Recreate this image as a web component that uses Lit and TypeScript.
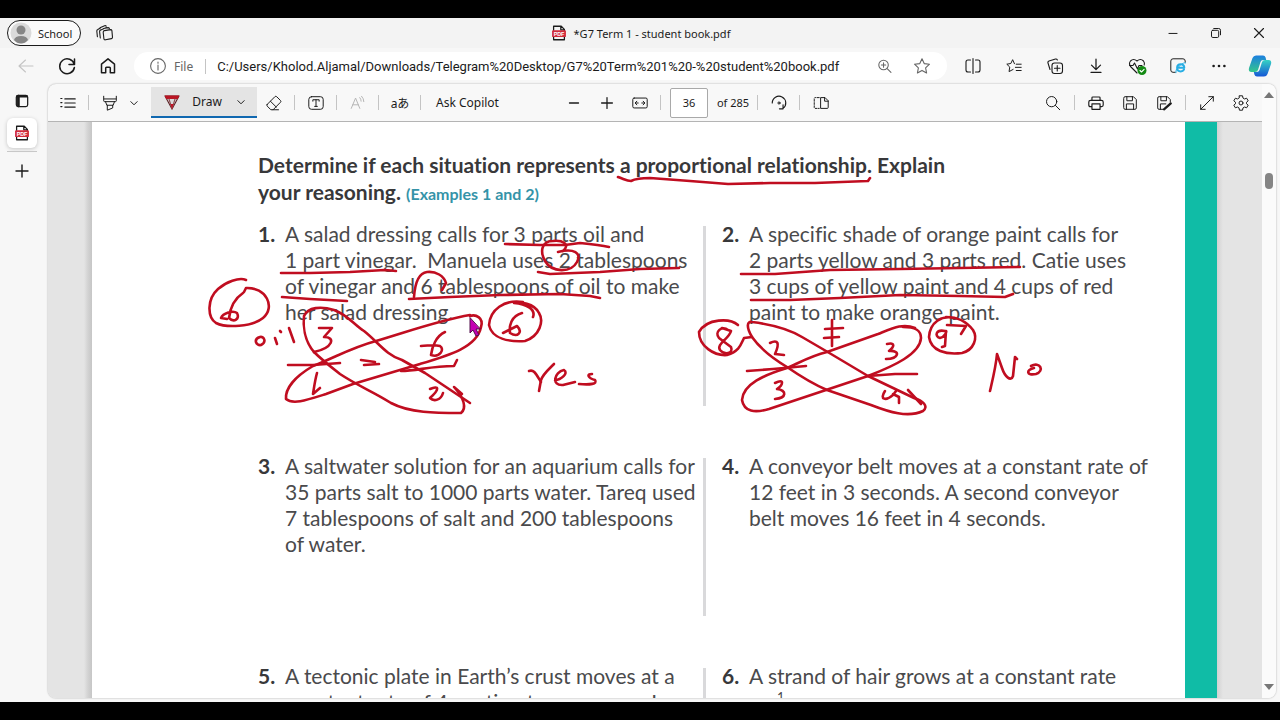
import { LitElement, html, svg, css } from "lit";
import { customElement, property } from "lit/decorators.js";

const shapes: Record<string, unknown> = {
  tabs: svg`<path d="M8.5 5.5 13 4.6q1 0 1.4.8M2.4 13.8 1.8 8q0-1.2 1-1.6L5.400 5M5.300 15 4.600 8.600q0-1.400 1.200-1.700L11.500 4.500M9.500 7.600l6-1q1.200 0 1.400 1l.6 6.600q0 1.200-1 1.400l-6 1.200q-1.400.2-1.600-1l-.7-6.500q0-1.200 1.300-1.700zM5 4.800l4.600-2q1-.4 1.600.4"/>`,
  back: svg`<path d="M17 10H3m6.500-6L3 10l6.500 6"/>`,
  reload: svg`<path stroke-width="1.500" d="M17.300 8.500A7.400 7.400 0 1 0 17.400 11.500M17.500 3v5.500H12"/>`,
  home: svg`<path stroke-width="1.500" d="M3.500 8.200 10 2.800l6.500 5.400v8.500h-4.200V12q0-.8-.8-.8H8.500q-.8 0-.8.8v4.700H3.500z"/>`,
  info: svg`<circle cx="10" cy="10" r="7.400"/><path d="M10 9v5M10 6v1.300"/>`,
  zoomIn: svg`<circle cx="9" cy="8.500" r="5"/><path d="m12.800 12.300 4 4M9 6.200v4.600M6.700 8.500h4.600"/>`,
  star: svg`<path d="m10 2.800 2.200 4.800 5.300.6-3.900 3.600 1 5.200-4.600-2.600-4.600 2.600 1-5.200-3.900-3.600 5.300-.6z"/>`,
  split: svg`<path d="M7.500 4H5Q3 4 3 6v8q0 2 2 2h2.500M12.500 4H15q2 0 2 2v8q0 2-2 2h-2.500M10 2.500v15"/>`,
  favs: svg`<path d="M10.500 7.500 8.500 3 6.500 7.200 2 8l3.300 3.200-.8 5 4.500-2.400M12.500 8H18M11.500 11.500H18M12.500 15H18"/>`,
  collections: svg`<rect x="7" y="7" width="10.500" height="10.500" rx="2.500"/><path d="M12.250 9.500v5.500M9.500 12.250H15M5 13.500 3 7q-.5-1.500 1-2l6.500-2q1.300-.3 1.900 1"/>`,
  download: svg`<path stroke-width="1.400" d="M10 2.500v11M5 9l5 5 5-5M4.500 17.200h11"/>`,
  health: svg`<path d="M10 17 3.500 10.500Q1.500 7.500 3.500 5 6.500 2 10 5q3.500-3 6.500 0 1.500 2 .7 4M2.500 9.500H6L7.500 7l3 6L12 9.500h3"/><circle cx="15" cy="14.500" r="4.500" fill="#138a13" stroke="none"/><path stroke="#fff" d="m13 14.500 1.500 1.500 2.600-2.700"/>`,
  ie: svg`<path d="M7 17H4.500q-2.500 0-2.500-2.500v-10Q2 2 4.500 2h11Q18 2 18 4.500V6"/><path d="M9 12h8q0-4-4-4t-4 4q0 4 4 4 2.600 0 3.700-2" stroke="#28aee4" stroke-width="2.200"/><path d="M7.500 17.500q-1-3 4-7.500t7-3.500" stroke="#28aee4"/>`,
  more: svg`<g fill="currentColor" stroke="none"><circle cx="5.500" cy="10" r="1.100"/><circle cx="10" cy="10" r="1.100"/><circle cx="14.500" cy="10" r="1.100"/></g>`,
  sidebar: svg`<rect x="3.700" y="3.700" width="12.600" height="12.600" rx="2" stroke-width="1.400"/><path stroke-width="2" d="M4.500 5h11"/><path stroke-width="3" d="M6 4.500v11"/>`,
  pdf: svg`<path d="M4 7V2.500h8.500L16 6v2M4 14v3.500h12V14M12 2.500v4h4" stroke-width="1.400"/><rect x="2.300" y="7" width="15.400" height="7.500" rx="1" fill="#d12b3c" stroke="none"/><text x="10" y="12.900" font-size="6" font-weight="700" text-anchor="middle" fill="#fff" stroke="none" font-family="Liberation Sans, sans-serif">PDF</text>`,
  plus: svg`<path stroke-width="1.400" d="M10 4v12M4 10h12"/>`,
  minus: svg`<path stroke-width="1.300" d="M5.500 10h9"/>`,
  list: svg`<path d="M6.500 5.500H18M6.500 10H18M6.500 14.500H18M2 5h1.300M2 9.500h1.300M2 14h1.300" stroke-width="1.300"/>`,
  marker: svg`<path d="M3 2.500v5q0 1 1 1h12q1 0 1-1v-5M5 8.500l1.500 4h7l1.500-4M7 12.500V18l6-2.500v-3M3.500 5.500h13"/>`,
  chevron: svg`<path d="m6.500 8.500 3.500 3.500 3.500-3.500"/>`,
  pen: svg`<path d="M3 4h14l-7 13z" fill="#d9d9d9" stroke="#5c2226"/><path d="M2.600 3.500h14.800L15.800 7H4.200z" fill="#ba1423" stroke="none"/><path d="m7 7 3 10M13 7l-3 10" stroke="#8c4b50"/><path d="m8.500 12 1.500 5 1.500-5z" fill="#c41224" stroke="none"/>`,
  eraser: svg`<path d="M2.500 11.500 11 3q1-1 2 0l4.200 4.200q1 1 0 2L9 17.500H6.500l-4-4q-1-1 0-2zM6 8l6.500 6.500M9 17.500h6"/>`,
  text: svg`<rect x="2" y="3" width="16" height="14" rx="3"/><path d="M6.500 8V6.400h7V8M10 6.400v7.400M8.500 13.800h3"/>`,
  read: svg`<path d="M2.500 16 7.300 4.500 12 16M4.200 12h6.200M12 4q1.500 1.500 1.500 4M14 2.500q2.500 2.500 2.500 6"/>`,
  fit: svg`<rect x="2" y="4.500" width="16" height="11" rx="1.500"/><path d="M8 10H5m1.500-2-2 2 2 2M12 10h3m-1.500-2 2 2-2 2"/>`,
  rotate: svg`<path stroke-width="1.300" d="M2.500 10a7.500 7.500 0 1 1 12 6M14.500 12v4.500H10.500"/><circle cx="10" cy="10" r="1.200"/>`,
  pages: svg`<path d="M10 4h4.500L18 7.500v7.500q0 1-1 1h-7zM14 4v4h4"/><path stroke-dasharray="2 1.500" d="M8 4H3.500q-1 0-1 1v10q0 1 1 1H8"/>`,
  search: svg`<circle cx="8.500" cy="8.500" r="5.700"/><path d="m12.700 12.700 4.800 4.800"/>`,
  print: svg`<path d="M5.500 14H3.700Q2 14 2 12.300V9q0-2 2-2h12q2 0 2 2v3.300q0 1.700-1.700 1.700h-1.800M5.500 7V4.300q0-1 1-1h7q1 0 1 1V7M5.500 11h9v6h-9z" stroke-width="1.300"/>`,
  save: svg`<path d="M3 4.500Q3 3 4.500 3h9.300L17 6.200v9.300q0 1.500-1.500 1.500h-11Q3 17 3 15.500zM6.500 3v4.500h6.200V3M6 17v-6h8v6"/>`,
  saveAs: svg`<path d="M8.500 17h-4Q3 17 3 15.500v-11Q3 3 4.500 3h9.300L17 6.200V9M6.500 3v4.500h6.200V3M6 17v-6h6"/><path stroke-width="2.600" d="m10 17 7.500-6.500"/>`,
  expand: svg`<path d="M3 17 17 3M12 3h5v5M3 12v5h5"/>`,
  gear: svg`<circle cx="10" cy="10" r="2.200"/><path d="M8.300 2h3.400l.5 2.500 1.700 1 2.400-.8L18 7.600l-1.900 1.600v1.600l1.900 1.600-1.700 2.900-2.400-.8-1.700 1-.5 2.500H8.300l-.5-2.500-1.700-1-2.400.8L2 12.400l1.900-1.600V9.200L2 7.600l1.700-2.900 2.400.8 1.700-1z"/>`,
  winMin: svg`<path d="M5.500 10.500h9"/>`,
  winMax: svg`<rect x="5" y="7" width="8" height="8" rx="1.500"/><path d="M7.500 5H13q2 0 2 2v5"/>`,
  winClose: svg`<path d="m5.500 5.500 9 9M14.500 5.500l-9 9"/>`,
};

@customElement("ui-icon")
class UiIcon extends LitElement {
  @property() name = "";
  @property({ type: Number }) size = 20;
  static styles = css`
    :host { display: inline-flex; flex: none; }
    svg { fill: none; stroke: currentColor; stroke-width: 1.1; stroke-linecap: round; stroke-linejoin: round; }
  `;
  render() {
    return html`<svg width=${this.size} height=${this.size} viewBox="0 0 20 20" aria-hidden="true">${shapes[this.name]}</svg>`;
  }
}

/* Pen strokes made on the page, in window coordinates. */
const strokes = [
  // underlines
  "M618 177 C624 179 627 181 631 181 C637 178 643 178 650 178 L690 181 L728 184 L770 183 L815 183 L868 181 870 178",
  "M505 244 540 245 565 245 580 243 C590 244 600 245 609 247",
  "M281 273 310 273 350 272 385 270 396 271",
  "M282 297 310 299 347 301",
  "M538 272 550 274 600 272 640 269 679 268",
  "M409 299 450 297 500 295 560 294 590 296 600 298",
  "M741 274 775 274 830 270 900 269 960 268 1020 267",
  "M751 300 790 300 840 298 900 295 960 296 1005 297 1013 294",
  // ring round the 2, hook round the 6
  "M563 251 C571 244 562 240 553 241 C541 241 540 252 545 261 C552 273 571 273 577 262 C582 253 574 248 558 252",
  "M414 297 C415 283 419 273 427 272 C436 271 444 276 446 283 L442 290",
  // ringed 6 on the left
  "M246 280 C239 277 226 282 218 289 C207 299 207 317 216 323 C226 328 252 327 263 318 C276 307 266 287 246 288 L244 292",
  "M243 293 C234 299 230 309 229 318 C234 323 240 319 237 313 C233 310 223 313 221 318 L227 319",
  // oil
  "M260 337 C253 339 256 346 261 345 C267 342 264 336 260 337",
  "M275 338 277 344", "M280 331 281 332", "M289 328 294 342",
  // first crossed loops
  "M314 352 C304 340 303 325 304 316 C308 307 321 306 334 310 C348 315 354 325 364 331 C378 342 386 355 402 360 L425 373 L470 403",
  "M314 352 C322 360 331 367 340 374 C358 386 374 392 391 403 C410 413 435 413 461 413 C467 408 464 398 454 387 L462 394",
  "M470 315 C440 320 410 331 376 341 C350 348 332 359 313 366 C296 376 285 388 286 399 C293 405 307 400 326 394 L353 384 L420 364 C450 355 477 347 481 327 C484 318 476 314 470 316",
  "M288 365 313 365 340 363",
  "M319 328 332 328 324 337 C336 337 333 348 314 352",
  "M317 373 C315 380 314 388 313 394 L320 388",
  "M361 360 375 362", "M364 365 379 364",
  "M445 332 C436 336 432 347 431 355 C440 358 445 349 440 346 C432 344 428 346 421 346",
  "M401 371 C417 371 430 366 454 366 L457 360",
  "M430 389 C439 385 440 389 430 398 C434 402 441 400 443 393",
  // ringed 6 on the right
  "M523 302 C504 299 490 310 489 325 C492 339 509 342 525 341 C540 336 544 321 539 313 C534 303 520 302 514 303 C526 304 536 309 533 317",
  "M522 313 C511 316 509 326 510 333 C518 338 523 332 517 326 L503 333",
  // Yes
  "M529 371 C534 369 536 374 541 382", "M554 364 C548 370 543 374 541 380 L539 391",
  "M555 380 C561 380 569 373 564 370 C554 372 551 386 563 385 L575 382",
  "M592 374 C586 374 588 378 595 380 C598 384 590 385 579 384",
  // ringed 8
  "M738 325 C730 318 707 318 699 332 C699 346 714 356 727 355 C740 351 741 344 744 338 L752 337",
  "M728 330 C722 325 714 332 719 338 L731 347 C734 354 724 355 720 350 C716 344 729 339 731 331 L722 328",
  // second crossed loops
  "M752 337 C746 327 747 321 752 322 C768 324 787 328 802 337 L826 351 L868 376 L914 398 C923 401 929 406 923 411 C908 418 889 412 871 405 L827 390 C813 384 800 376 787 367 C772 358 759 347 752 337",
  "M915 328 C903 323 893 328 878 334 L827 352 C810 356 797 364 787 368 C764 375 743 384 742 400 C744 412 755 413 769 409 L826 390 L868 376 C894 366 920 354 921 338 C921 330 915 327 903 327",
  "M747 371 773 369 806 366", "M868 376 895 374 917 374",
  "M770 343 C778 339 780 343 775 354 L784 355",
  "M775 383 C785 378 783 385 777 389 C787 390 787 398 775 399",
  "M832 320 832 346", "M825 329 843 328", "M824 338 839 337",
  "M887 344 C896 342 894 347 889 351 C901 350 899 359 886 359",
  "M885 391 C879 400 886 401 893 395 L896 391 M893 394 899 397 899 403", "M908 390 921 404",
  // ringed 9
  "M954 318 C942 315 930 322 929 337 C931 351 946 355 962 353 C974 350 978 338 973 330 C967 322 958 317 946 317",
  "M945 331 C936 329 934 336 940 338 C945 337 947 331 946 331 L945 346 942 347", "M947 325 966 326 961 334",
  // No
  "M990 391 C993 378 996 366 997 354 L1002 368 C1005 377 1011 382 1013 376 L1015 357 1017 359",
  "M1031 366 C1040 361 1045 371 1036 374 C1026 376 1026 370 1034 368",
];

const problems = [
  { n: 1, text: ["A salad dressing calls for 3 parts oil and", "1 part vinegar.\u00a0 Manuela uses 2 tablespoons", "of vinegar and 6 tablespoons of oil to make", "her salad dressing."] },
  { n: 2, text: ["A specific shade of orange paint calls for", "2 parts yellow and 3 parts red. Catie uses", "3 cups of yellow paint and 4 cups of red", "paint to make orange paint."] },
  { n: 3, text: ["A saltwater solution for an aquarium calls for", "35 parts salt to 1000 parts water. Tareq used", "7 tablespoons of salt and 200 tablespoons", "of water."] },
  { n: 4, text: ["A conveyor belt moves at a constant rate of", "12 feet in 3 seconds. A second conveyor", "belt moves 16 feet in 4 seconds."] },
  { n: 5, text: ["A tectonic plate in Earth’s crust moves at a", "constant rate of 4 centimeters per year. In a"] },
  { n: 6, text: ["A strand of hair grows at a constant rate"], numerator: "1" },
];

@customElement("book-page")
class BookPage extends LitElement {
  static styles = css`
    :host { display: flex; flex: 1; min-height: 0; overflow: hidden; background: #e4e4e4; font-family: Lato, sans-serif; font-variant-ligatures: none; color: #4a4a4c; }
    .edge { flex: none; width: 44px; background: linear-gradient(to right, transparent 36px, #d2d2d2 40px, #c6c6c6); }
    .edge.right { width: 45px; background: linear-gradient(to left, transparent 39px, #d2d2d2); }
    .paper { position: relative; flex: 1; min-width: 0; background: #fff; border-right: 32px solid #10bca6; padding: 29px 24px 0 166px; }
    h1 { margin: 0; font-size: 21px; line-height: 27px; font-weight: 700; color: #38383a; white-space: nowrap; }
    .ref { font-size: 16px; color: #3593a8; }
    .grid { display: grid; grid-template-columns: 445px 1fr; row-gap: 47px; margin-top: 14px; }
    .item { display: flex; font-size: 21px; line-height: 26px; min-height: 163px; white-space: nowrap; }
    .item:nth-child(-n + 2) { min-height: 185px; }
    .item:nth-child(even) { background: linear-gradient(#d9d9db, #d9d9db) 0 5px / 3px 100% no-repeat; padding-left: 19px; }
    .n { width: 27px; flex: none; font-weight: 700; color: #38383a; }
    .line { display: block; }
    .num { display: block; font-size: 13px; line-height: 16px; padding-left: 28px; }
    .ink { position: absolute; left: 0; top: 0; width: 1093px; height: 576px; fill: none; stroke: #c00d20; stroke-width: 2.6; stroke-linecap: round; stroke-linejoin: round; }
  `;
  render() {
    return html`
      <div class="edge"></div>
      <article class="paper">
        <h1>Determine if each situation represents a proportional relationship. Explain<br />your reasoning. <span class="ref">(Examples 1 and 2)</span></h1>
        <div class="grid">
          ${problems.map((p) => html`<section class="item"><span class="n">${p.n}.</span><div>${p.text.map((t) => html`<span class="line">${t}</span>`)}${p.numerator ? html`<span class="num">${p.numerator}</span>` : ""}</div></section>`)}
        </div>
        <svg class="ink" viewBox="92 122 1093 576" role="img" aria-label="Pen notes">
          ${strokes.map((d) => svg`<path d=${d} />`)}
          <path d="M470 318v15l3-3 3 6 3-1-3-6h4z" fill="#c400b4" stroke="#52104c" stroke-width="1" />
        </svg>
      </article>
      <div class="edge right"></div>
    `;
  }
}

const btn = (name: string, label: string, size = 18, cls = "") =>
  html`<button class="b ${cls}" aria-label=${label}><ui-icon name=${name} .size=${size}></ui-icon></button>`;
const sep = html`<span class="sep"></span>`;

@customElement("app-root")
class AppRoot extends LitElement {
  static styles = css`
    :host { display: flex; flex-direction: column; height: 100vh; box-sizing: border-box; border: solid #000; border-width: 18px 0; background: #f7f7f7; font-family: "Noto Sans", "Noto Sans CJK JP", sans-serif; font-size: 12px; color: #1b1b1b; overflow: hidden; }
    button, input { font: inherit; color: inherit; border: 0; background: none; padding: 0; margin: 0; box-sizing: border-box; }
    button { display: inline-flex; align-items: center; justify-content: center; }
    .title { display: grid; grid-template-columns: 1fr auto 1fr; align-items: center; height: 30px; flex: none; background: #f3f3f3; font-size: 11px; }
    .left { display: flex; align-items: center; gap: 14px; padding-left: 7px; }
    .pill { height: 26px; width: 74px; border: 1px solid #1b1b1b; border-radius: 13px; background: #fafafa; gap: 6px; justify-content: flex-start; padding-left: 2px; }
    .name { display: flex; align-items: center; gap: 6px; }
    .win { display: flex; justify-content: flex-end; }
    .win .b { width: 43px; }
    .nav { display: flex; align-items: center; height: 36px; flex: none; padding-left: 5px; }
    .nav .b { width: 41px; height: 32px; }
    .nav .dim { color: #c4c4c4; }
    .address { display: flex; align-items: center; flex: 1; min-width: 0; height: 28px; margin: 0 5px 0 6px; border-radius: 14px; background: #fff; padding: 0 6px 0 14px; }
    .address > ui-icon { color: #666; }
    .scheme { margin-left: 6px; color: #666; }
    .address .sep { margin: 0 9px 0 12px; }
    .address input { flex: 1; min-width: 0; padding-left: 2px; font-family: Roboto, sans-serif; font-size: 13px; outline: none; }
    .address .b { width: 38px; color: #666; }
    .main { display: flex; flex: 1; min-height: 0; }
    .side { width: 44px; margin-right: 4px; display: flex; flex-direction: column; align-items: center; padding-top: 8px; flex: none; box-sizing: border-box; }
    .tile { width: 30px; height: 30px; margin: 8px 0 3px; border-radius: 6px; background: #fff; box-shadow: 0 1px 4px #0003; }
    .rule { width: 30px; height: 1px; background: #c8c8c8; margin-bottom: 9px; }
    .panel { display: flex; flex: 1; min-width: 0; margin: 0 4px 4px 0; border-radius: 8px; overflow: hidden; box-shadow: 0 0 2px #0005; background: #f8f8f8; }
    .view { display: flex; flex-direction: column; flex: 1; min-width: 0; }
    .tools { display: flex; align-items: center; height: 38px; flex: none; box-sizing: border-box; border-bottom: 1px solid #b4b4b4; padding: 0 9px 0 8px; white-space: nowrap; }
    .tools .b { width: 24px; height: 28px; flex: none; }
    .tools .off { color: #b5b5b5; }
    .tools .draw { width: 106px; height: 31px; margin: 0 5px; background: #e4e4e4; border-bottom: 2px solid #1068b0; gap: 10px; padding-left: 4px; flex: none; }
    .sep { width: 1px; height: 15px; background: #c4c4c4; margin: 0 9px 0 8px; flex: none; }
    .copilot { margin-left: 6px; }
    .middle { display: flex; align-items: center; margin-left: 63px; }
    .zoom { display: flex; gap: 9px; }
    .middle input { width: 38px; height: 30px; border: 1px solid #a9a9a9; border-radius: 2px; background: #fff; text-align: center; margin-right: 9px; }
    .middle { font-size: 11px; }
    .right { display: flex; align-items: center; margin-left: auto; gap: 10px; }
    .right .sep { margin: 0 -1px; }
    .scroll { width: 14px; flex: none; background: #fbfbfb; display: flex; flex-direction: column; align-items: center; padding: 8px 0; box-sizing: border-box; }
    .up, .down { border: 5px solid transparent; border-top: 0; border-bottom: 6px solid #777; }
    .down { border-bottom: 0; border-top: 6px solid #777; margin-top: auto; }
    .thumb { width: 8px; height: 16px; border-radius: 4px; background: #858585; margin-top: 75px; }
  `;
  render() {
    return html`
      <header class="title">
        <div class="left">
          <button class="pill"><svg width="22" height="22" viewBox="0 0 22 22" aria-hidden="true"><circle cx="11" cy="11" r="10.500" fill="#dadada" /><circle cx="11" cy="8" r="4.500" fill="#868686" /><path d="M4 18q1-4 7-4t7 4q-3 3.500-7 3.500T4 18" fill="#868686" /></svg>School</button>
          ${btn("tabs", "Tab actions", 20)}
        </div>
        <div class="name"><ui-icon name="pdf" .size=${18}></ui-icon><span>*G7 Term 1 - student book.pdf</span></div>
        <div class="win">${btn("winMin", "Minimize")}${btn("winMax", "Restore")}${btn("winClose", "Close", 20)}</div>
      </header>
      <nav class="nav">
        ${btn("back", "Back", 20, "dim")}${btn("reload", "Refresh", 20)}${btn("home", "Home", 20)}
        <div class="address">
          <ui-icon name="info" .size=${20}></ui-icon><span class="scheme">File</span>${sep}
          <input aria-label="Address" value="C:/Users/Kholod.Aljamal/Downloads/Telegram%20Desktop/G7%20Term%201%20-%20student%20book.pdf" />
          ${btn("zoomIn", "Zoom", 19)}${btn("star", "Add to favorites", 20)}
        </div>
        ${btn("split", "Split screen", 20)}${btn("favs", "Favorites")}${btn("collections", "Collections", 20)}${btn("download", "Downloads")}${btn("health", "Browser essentials", 20)}${btn("ie", "Internet Explorer mode")}${btn("more", "More", 24)}
        <button class="b" aria-label="Copilot"><svg width="24" height="24" viewBox="0 0 24 24" aria-hidden="true"><defs><linearGradient id="a" x2="0" y2="1"><stop stop-color="#1c7fe0" /><stop offset="1" stop-color="#35c78c" /></linearGradient><linearGradient id="b" x2="0" y2="1"><stop stop-color="#36d3c4" /><stop offset="1" stop-color="#1556d6" /></linearGradient></defs><path d="M8 1.500h7q2 0 2.600 2l.6 2.500h-3q-2 0-2.700 2L10 16q-.8 2-3 2H3.500Q0 18 1 14L4.500 4Q5.500 1.500 8 1.500z" fill="url(#a)" /><path d="M16 22.500H9q-2 0-2.600-2L5.800 18h3q2 0 2.700-2L14 8q.8-2 3-2h3.500Q24 6 23 10l-3.500 10q-1 2.500-3.500 2.500z" fill="url(#b)" /></svg></button>
      </nav>
      <div class="main">
        <aside class="side">
          ${btn("sidebar", "Tab menu")}
          <button class="tile" aria-label="Student book tab"><ui-icon name="pdf" .size=${18}></ui-icon></button>
          <div class="rule"></div>
          ${btn("plus", "New tab", 20)}
        </aside>
        <div class="panel">
          <div class="view">
            <div class="tools">
              ${btn("list", "Contents")}${sep}${btn("marker", "Highlight")}${btn("chevron", "Highlight options")}
              <button class="draw"><ui-icon name="pen" .size=${20}></ui-icon><span>Draw</span><ui-icon name="chevron" .size=${18}></ui-icon></button>
              ${btn("eraser", "Erase")}${sep}${btn("text", "Add text")}${sep}${btn("read", "Read aloud", 18, "off")}${sep}
              <button class="b" aria-label="Translate">aあ</button>${sep}
              <button class="copilot">Ask Copilot</button>
              <div class="middle">
                <div class="zoom">${btn("minus", "Zoom out", 20)}${btn("plus", "Zoom in")}${btn("fit", "Fit to width")}</div>${sep}
                <input aria-label="Page number" value="36" /><span>of 285</span>${sep}${btn("rotate", "Rotate")}${sep}${btn("pages", "Page view")}
              </div>
              <div class="right">${btn("search", "Find")}${sep}${btn("print", "Print")}${btn("save", "Save")}${btn("saveAs", "Save as")}${sep}${btn("expand", "Full screen")}${btn("gear", "Settings")}</div>
            </div>
            <book-page></book-page>
          </div>
          <div class="scroll"><span class="up"></span><span class="thumb"></span><span class="down"></span></div>
        </div>
      </div>
    `;
  }
}
